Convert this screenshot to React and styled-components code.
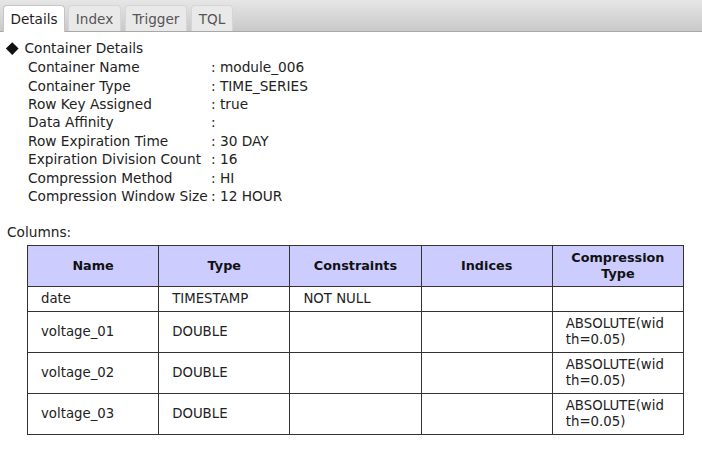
import styled, { createGlobalStyle } from "styled-components";

const Global = createGlobalStyle`
  html, body {
    margin: 0;
    padding: 0;
    background: #fff;
  }
  body {
    font-family: "DejaVu Sans", Verdana, sans-serif;
    color: #222;
  }
`;

const Page = styled.div`
  width: 702px;
  height: 450px;
  overflow: hidden;
`;

const TabBar = styled.div`
  display: flex;
  align-items: flex-end;
  gap: 3px;
  height: 31px;
  padding-left: 3px;
  background: linear-gradient(#e6e6e6, #c9c9c9);
  border-bottom: 1px solid #a8a8a8;
`;

const Tab = styled.div`
  box-sizing: border-box;
  width: ${(p) => p.$w}px;
  margin-right: ${(p) => p.$gap || 0}px;
  display: flex;
  align-items: center;
  justify-content: center;
  font-size: 13.6px;
  color: ${(p) => (p.$active ? "#1e1e1e" : "#555")};
  background: ${(p) => (p.$active ? "#fff" : "#e9e9e9")};
  border: 1px solid ${(p) => (p.$active ? "#c4c4c4" : "#d6d6d6")};
  border-bottom: none;
  border-radius: 4px 4px 0 0;
  margin-bottom: ${(p) => (p.$active ? "-1px" : "0")};
  height: ${(p) => (p.$active ? "27px" : "26px")};
`;

const Body = styled.div`
  padding: 7px 0 0 7px;
`;

const SectionTitle = styled.div`
  display: flex;
  align-items: center;
  gap: 6px;
  font-size: 13.7px;
  height: 18px;
`;

const Diamond = styled.span`
  width: 8.5px;
  height: 8.5px;
  background: #111;
  transform: rotate(45deg);
  margin: 0 2px 0 1px;
`;

const Props = styled.div`
  display: grid;
  grid-template-columns: 183px auto;
  grid-auto-rows: 18.43px;
  align-items: center;
  padding-left: 21px;
  margin-top: 1px;
  font-size: 13.7px;
`;

const Label = styled.div`
  white-space: nowrap;
`;

const Value = styled.div`
  white-space: nowrap;
`;

const ColumnsLabel = styled.div`
  margin-top: 18px;
  font-size: 13.7px;
  height: 18px;
  line-height: 18px;
`;

const Table = styled.table`
  margin: 4px 0 0 20px;
  width: 657px;
  border-collapse: collapse;
  table-layout: fixed;
  font-size: 13.3px;
  color: #222;
`;

const Th = styled.th`
  background: #ccccff;
  border: 1px solid #333;
  height: 40px;
  padding: 0 8px;
  font-size: 12.8px;
  font-weight: bold;
  color: #111;
  line-height: 16px;
`;

const Td = styled.td`
  border: 1px solid #333;
  padding: 4px 19px 4px 13px;
  line-height: 16px;
  height: ${(p) => (p.$tall ? "32px" : "16px")};
  vertical-align: middle;
  word-break: break-all;
`;

const tabs = [
  { name: "Details", w: 62, gap: 0 },
  { name: "Index", w: 53, gap: 1 },
  { name: "Trigger", w: 62, gap: 1 },
  { name: "TQL", w: 42, gap: 0 },
];

const details = [
  ["Container Name", "module_006"],
  ["Container Type", "TIME_SERIES"],
  ["Row Key Assigned", "true"],
  ["Data Affinity", ""],
  ["Row Expiration Time", "30 DAY"],
  ["Expiration Division Count", "16"],
  ["Compression Method", "HI"],
  ["Compression Window Size", "12 HOUR"],
];

const rows = [
  ["date", "TIMESTAMP", "NOT NULL", "", ""],
  ["voltage_01", "DOUBLE", "", "", "ABSOLUTE(width=0.05)"],
  ["voltage_02", "DOUBLE", "", "", "ABSOLUTE(width=0.05)"],
  ["voltage_03", "DOUBLE", "", "", "ABSOLUTE(width=0.05)"],
];

export default function App() {
  return (
    <Page>
      <Global />
      <TabBar>
        {tabs.map((t, i) => (
          <Tab key={t.name} $active={i === 0} $w={t.w} $gap={t.gap}>
            {t.name}
          </Tab>
        ))}
      </TabBar>
      <Body>
        <SectionTitle>
          <Diamond />
          Container Details
        </SectionTitle>
        <Props>
          {details.map(([k, v]) => [
            <Label key={k}>{k}</Label>,
            <Value key={k + "v"}>: {v}</Value>,
          ])}
        </Props>
        <ColumnsLabel>Columns:</ColumnsLabel>
        <Table>
          <thead>
            <tr>
              <Th>Name</Th>
              <Th>Type</Th>
              <Th>Constraints</Th>
              <Th>Indices</Th>
              <Th>Compression Type</Th>
            </tr>
          </thead>
          <tbody>
            {rows.map((r, i) => (
              <tr key={i}>
                {r.map((c, j) => (
                  <Td key={j} $tall={i > 0}>
                    {c}
                  </Td>
                ))}
              </tr>
            ))}
          </tbody>
        </Table>
      </Body>
    </Page>
  );
}
